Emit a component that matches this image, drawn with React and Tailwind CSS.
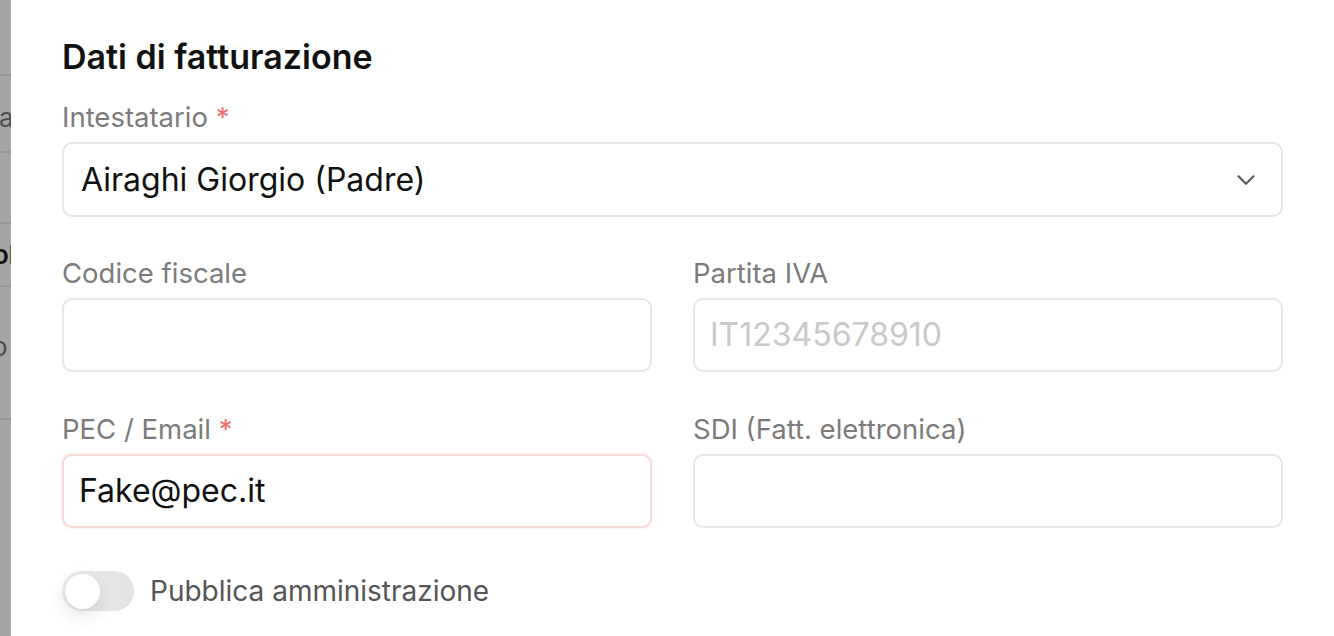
import React from 'react';

function Field({ label, required, children }) {
  return (
    <div className="flex flex-col">
      <label className="text-[27.5px] leading-[32px] text-[#7b7b7b] mb-[9px]">
        {label}
        {required && <span className="text-[#ef6f6f]"> *</span>}
      </label>
      {children}
    </div>
  );
}

function TextInput({ value, placeholder, error }) {
  return (
    <div
      className={
        error
          ? 'h-[74px] rounded-[10px] border-2 border-[#f6dada] bg-white px-[15px] flex items-center shadow-[0_0_3px_rgba(239,68,68,0.18)]'
          : 'h-[74px] rounded-[10px] border-2 border-[#e6e6e6] bg-white px-[15px] flex items-center'
      }
    >
      {value ? (
        <span className="text-[32px] text-[#111]">{value}</span>
      ) : (
        <span className="text-[32px] text-[#c9c9c9]">{placeholder}</span>
      )}
    </div>
  );
}

export default function App() {
  return (
    <div className="flex w-[1334px] h-[636px] overflow-hidden bg-white" style={{ fontFamily: 'Inter, "Noto Sans", sans-serif' }}>
      {/* background page behind the overlay */}
      <div className="w-[11px] shrink-0 overflow-hidden bg-[#a5a5a5] flex flex-col">
        <div className="h-[76px] border-b-2 border-[#989898]" />
        <div className="h-[77px] border-b-2 border-[#989898] flex items-center pt-[8px]">
          <span className="text-[26px] text-[#4e4e4e] whitespace-nowrap ml-[-1px]">at</span>
        </div>
        <div className="h-[71px] border-b-2 border-[#989898]" />
        <div className="h-[63px] border-b-2 border-[#989898] flex items-center">
          <span className="text-[26px] font-semibold text-[#111] whitespace-nowrap ml-[-7px]">ol</span>
        </div>
        <div className="h-[133px] border-b-2 border-[#989898] pt-[40px]">
          <span className="text-[26px] text-[#4e4e4e] whitespace-nowrap ml-[-8px]">o</span>
        </div>
        <div className="flex-1" />
      </div>

      {/* modal */}
      <div className="flex-1 bg-white px-[51px] pt-[37px] flex flex-col">
        <h2 className="text-[34px] leading-[40px] font-semibold text-[#111]">Dati di fatturazione</h2>

        <div className="mt-[24px]">
          <Field label="Intestatario" required>
            <div className="h-[75px] rounded-[10px] border-2 border-[#e6e6e6] bg-white pl-[17px] pr-[20px] flex items-center justify-between">
              <span className="text-[32px] text-[#111]">Airaghi Giorgio (Padre)</span>
              <svg width="30" height="30" viewBox="0 0 24 24" fill="none" stroke="#5c5c5c" strokeWidth="1.8" strokeLinecap="round" strokeLinejoin="round">
                <path d="M6 9l6 6 6-6" />
              </svg>
            </div>
          </Field>
        </div>

        <div className="grid grid-cols-2 gap-x-[41px] mt-[40px]">
          <Field label="Codice fiscale">
            <TextInput />
          </Field>
          <Field label="Partita IVA">
            <TextInput placeholder="IT12345678910" />
          </Field>
        </div>

        <div className="grid grid-cols-2 gap-x-[41px] mt-[41px]">
          <Field label="PEC / Email" required>
            <TextInput value="Fake@pec.it" error />
          </Field>
          <Field label="SDI (Fatt. elettronica)">
            <TextInput />
          </Field>
        </div>

        <div className="flex items-center gap-[16px] mt-[42px]">
          <div className="w-[72px] h-[40px] rounded-full bg-gradient-to-r from-[#ececec] to-[#e2e2e2] p-[3px] flex items-center">
            <div className="w-[35px] h-[35px] rounded-full bg-white shadow-[0_6px_18px_rgba(0,0,0,0.12)]" />
          </div>
          <span className="text-[28px] text-[#555]">Pubblica amministrazione</span>
        </div>
      </div>
    </div>
  );
}
